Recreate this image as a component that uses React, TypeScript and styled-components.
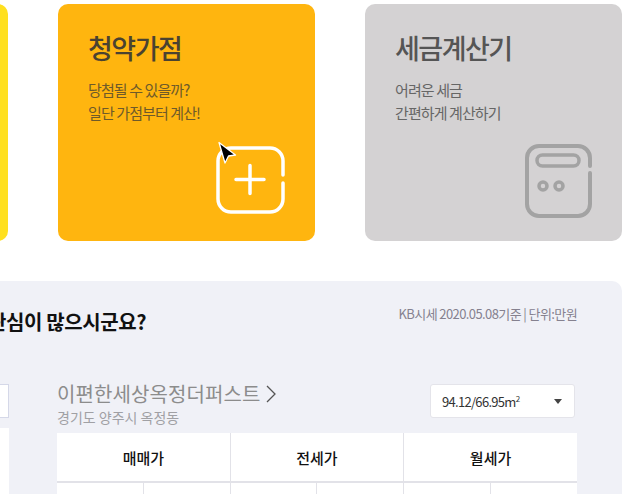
import React from 'react';
import styled, {createGlobalStyle} from "styled-components";

const GlobalStyle = createGlobalStyle`
    html, body {
        margin: 0;
        padding: 0;
        background: #fff;
    }
    body {
        font-family: "Noto Sans CJK KR", "Noto Sans", sans-serif;
    }
`;

const App: React.FC = () => {
    return (
        <Viewport>
            <GlobalStyle/>
            <CardRow>
                <Card $bg="#FFE01F"/>
                <Card $bg="#FFB50F">
                    <CardTitle $color="#4A4231">청약가점</CardTitle>
                    <CardDesc $color="#6E5A2A">당첨될 수 있을까?<br/>일단 가점부터 계산!</CardDesc>
                    <PlusIcon/>
                    <Pointer/>
                </Card>
                <Card $bg="#D4D2D3">
                    <CardTitle $color="#555555">세금계산기</CardTitle>
                    <CardDesc $color="#666666">어려운 세금<br/>간편하게 계산하기</CardDesc>
                    <TaxIcon/>
                </Card>
            </CardRow>

            <Panel>
                <PanelHead>
                    <PanelTitle>관심이 많으시군요?</PanelTitle>
                    <PanelNote>KB시세 2020.05.08기준 | 단위:만원</PanelNote>
                </PanelHead>
                <Columns>
                    <LeftColumn>
                        <LeftSelect/>
                        <LeftTable/>
                    </LeftColumn>
                    <RightColumn>
                        <AptHead>
                            <div>
                                <AptName>이편한세상옥정더퍼스트<Chevron/></AptName>
                                <AptAddr>경기도 양주시 옥정동</AptAddr>
                            </div>
                            <SizeSelect>
                                <span>94.12/66.95m<sup>2</sup></span>
                                <Caret/>
                            </SizeSelect>
                        </AptHead>
                        <PriceTable>
                            <thead>
                                <tr>
                                    <HeadCell colSpan={2}>매매가</HeadCell>
                                    <HeadCell colSpan={2}>전세가</HeadCell>
                                    <HeadCell colSpan={2}>월세가</HeadCell>
                                </tr>
                            </thead>
                            <tbody>
                                <tr>
                                    <SubCell>하위평균가</SubCell>
                                    <SubCell>상위평균가</SubCell>
                                    <SubCell>하위평균가</SubCell>
                                    <SubCell>상위평균가</SubCell>
                                    <SubCell>보증금</SubCell>
                                    <SubCell>월세</SubCell>
                                </tr>
                            </tbody>
                        </PriceTable>
                    </RightColumn>
                </Columns>
            </Panel>
        </Viewport>
    );
};

export default App;

const PlusIcon: React.FC = () => (
    <PlusSvg width="70" height="68" viewBox="0 0 70 68" fill="none" stroke="#fff" strokeWidth="3.5" strokeLinecap="round">
        <path d="M67 29 V15 A13 13 0 0 0 54 2 H15 A13 13 0 0 0 2 15 V53 A13 13 0 0 0 15 66 H54 A13 13 0 0 0 67 53 V37"/>
        <path d="M20 33.500 H48 M34 19.500 V47.500"/>
    </PlusSvg>
);

const TaxIcon: React.FC = () => (
    <TaxSvg width="68" height="74" viewBox="0 0 68 74" fill="none" stroke="#A3A3A3" strokeWidth="4" strokeLinecap="round">
        <path d="M65 22 V14 A12 12 0 0 0 53 2 H14 A12 12 0 0 0 2 14 V60 A12 12 0 0 0 14 72 H53 A12 12 0 0 0 65 60 V29"/>
        <rect x="12" y="11" width="42" height="11" rx="5.500" strokeWidth="3.500"/>
        <circle cx="18" cy="42" r="4" strokeWidth="3.500"/>
        <circle cx="34" cy="42" r="4" strokeWidth="3.500"/>
    </TaxSvg>
);

const Pointer: React.FC = () => (
    <PointerSvg width="20" height="24" viewBox="0 0 20 24">
        <path d="M2 1.500 L18.500 14 L11.500 15 L8 22 Z" fill="#000" stroke="#fff" strokeWidth="1.300" strokeLinejoin="round"/>
    </PointerSvg>
);

const Chevron: React.FC = () => (
    <ChevronSvg width="10" height="18" viewBox="0 0 10 18" fill="none" stroke="#555" strokeWidth="1.300">
        <path d="M1 1 L9 9 L1 17"/>
    </ChevronSvg>
);

const Viewport = styled.div`
    width: 624px;
    height: 494px;
    overflow: hidden;
`;

const CardRow = styled.div`
    display: grid;
    grid-template-columns: repeat(3, 257px);
    column-gap: 50px;
    margin-left: -249px;
    padding-top: 4px;
`;

const Card = styled.div<{$bg: string}>`
    position: relative;
    display: flex;
    flex-direction: column;
    box-sizing: border-box;
    height: 237px;
    padding: 24px 30px 0;
    border-radius: 10px;
    background: ${props => props.$bg};
`;

const CardTitle = styled.h3<{$color: string}>`
    margin: 0;
    font-size: 27px;
    line-height: 40px;
    font-weight: 500;
    letter-spacing: -1.5px;
    color: ${props => props.$color};
`;

const CardDesc = styled.p<{$color: string}>`
    margin: 10px 0 0;
    font-size: 15px;
    line-height: 23px;
    font-weight: 400;
    letter-spacing: -0.9px;
    color: ${props => props.$color};
`;

const PlusSvg = styled.svg`
    position: absolute;
    right: 29px;
    bottom: 27px;
`;

const TaxSvg = styled.svg`
    position: absolute;
    right: 29px;
    bottom: 23px;
`;

const PointerSvg = styled.svg`
    position: absolute;
    left: 159px;
    top: 137px;
`;

const Panel = styled.section`
    box-sizing: border-box;
    width: 682px;
    height: 300px;
    margin: 40px 0 0 -60px;
    padding: 26px 45px 0 48px;
    background: #F0F1F7;
    border-radius: 10px;
`;

const PanelHead = styled.div`
    display: flex;
    justify-content: space-between;
    align-items: flex-start;
    height: 75px;
`;

const PanelTitle = styled.h2`
    margin: 0;
    font-size: 20px;
    line-height: 30px;
    font-weight: 700;
    letter-spacing: -0.4px;
    color: #111;
`;

const PanelNote = styled.div`
    margin-top: -3px;
    font-size: 13px;
    line-height: 20px;
    letter-spacing: -0.6px;
    color: #85818F;
`;

const Columns = styled.div`
    display: flex;
    gap: 48px;
`;

const LeftColumn = styled.div`
    width: 21px;
    padding-top: 2px;
`;

const LeftSelect = styled.div`
    box-sizing: border-box;
    height: 34px;
    border: 1px solid #D5D8E8;
    background: #fff;
`;

const LeftTable = styled.div`
    height: 100px;
    margin-top: 10px;
    background: #fff;
`;

const RightColumn = styled.div`
    width: 520px;
`;

const AptHead = styled.div`
    display: flex;
    justify-content: space-between;
    align-items: flex-start;
    height: 51px;
`;

const AptName = styled.div`
    display: flex;
    align-items: center;
    height: 24px;
    font-size: 20px;
    line-height: 24px;
    color: #8C8C8C;
    letter-spacing: 0.1px;
`;

const ChevronSvg = styled.svg`
    margin-left: 5px;
`;

const AptAddr = styled.div`
    margin-top: 1px;
    font-size: 14px;
    line-height: 20px;
    color: #A0A0A4;
`;

const SizeSelect = styled.div`
    box-sizing: border-box;
    display: flex;
    align-items: center;
    justify-content: space-between;
    width: 145px;
    height: 34px;
    margin: 2px 2px 0 0;
    padding: 0 12px 0 11px;
    background: #fff;
    border: 1px solid #E4E4EA;
    border-radius: 3px;
    font-size: 13px;
    letter-spacing: -0.7px;
    color: #333;

    sup {
        font-size: 8px;
        line-height: 0;
    }
`;

const Caret = styled.i`
    width: 0;
    height: 0;
    border-left: 4px solid transparent;
    border-right: 4px solid transparent;
    border-top: 5px solid #444;
`;

const PriceTable = styled.table`
    width: 520px;
    table-layout: fixed;
    border-collapse: collapse;
    background: #fff;
`;

const HeadCell = styled.th`
    height: 48px;
    padding: 0;
    font-size: 15px;
    font-weight: 500;
    color: #111;
    border-left: 1px solid #E2E2E8;
    border-bottom: 2px solid #E2E2E8;

    &:first-child {
        border-left: 0;
    }
`;

const SubCell = styled.td`
    height: 48px;
    padding: 0;
    font-size: 14px;
    text-align: center;
    color: #111;
    border-left: 1px solid #E2E2E8;

    &:first-child {
        border-left: 0;
    }
`;
